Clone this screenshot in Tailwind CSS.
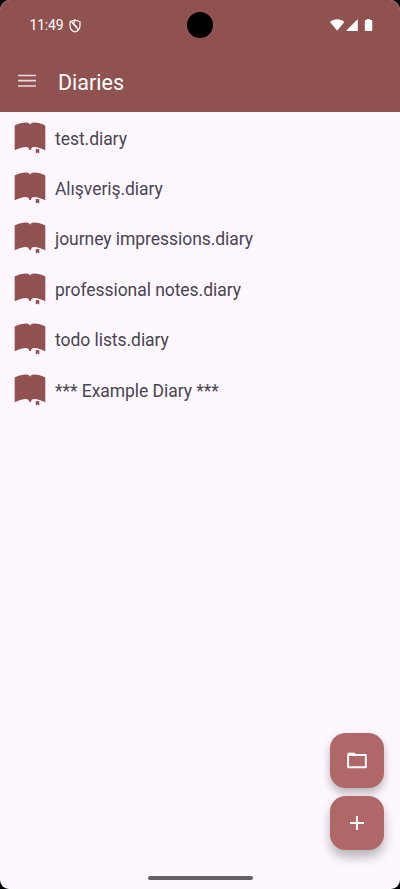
<!DOCTYPE html>
<html lang="en">
<head>
<meta charset="utf-8">
<title>Diaries</title>
<script src="https://cdn.jsdelivr.net/npm/@tailwindcss/browser@4"></script>
</head>
<body class="bg-black">
<svg class="hidden">
  <symbol id="book" viewBox="0 0 32 32">
    <path fill="#905250" d="M.7 3.4C4 1.7 9.2.5 12.4.6C14.6.7 15.6 1.6 16.1 2.8C16.7 1.6 17.7.7 19.8.6C23 .5 28 1.7 31.3 3.4V28.3C27.5 26.4 22.8 25 20.3 25.1C18 25.2 17.4 26.3 16.8 28H15.4C14.8 26.3 14 25.2 11.8 25.1C9.3 25 4.5 26.4.7 28.3Z"/>
    <path fill="#fef7ff" d="M21.2 26H26V31H21.2Z"/>
    <path fill="#905250" d="M21.8 26.9L25.3 27.3V31.6L23.6 30.4L21.8 31.6Z"/>
  </symbol>
</svg>
<div class="relative flex h-[889px] w-[400px] flex-col overflow-hidden rounded-t-[10px] rounded-b-[9px] bg-[#fef7ff] font-[Roboto,sans-serif]">
  <header class="flex h-[112.4px] shrink-0 flex-col bg-[#905250] text-white">
    <div class="flex h-[50px] items-center pr-[27px] pl-[29.5px]">
      <span class="w-[39px] whitespace-nowrap text-[14px] leading-[16px] tracking-[-0.2px]">11:49</span>
      <svg class="mt-px h-[14px] w-[12px]" viewBox="0 0 12 14" fill="none" stroke="white" stroke-width="1.2"><path d="M6 1L11 2.7V6.7C11 9.6 8.7 12 6 13C3.3 12 1 9.6 1 6.7V2.7Z"/><path d="M2.6 3L8.6 9.6V11.4M6 1.2L4.6 4.6L8 8.4"/></svg>
      <svg class="ml-auto h-[14px] w-[43px]" viewBox="0 0 43 14" fill="white"><path d="M0 3.9C4 .3 10.3.3 14.3 3.9L7.2 12.7Z"/><path d="M27.8 1V13H15.8Z"/><path d="M36.7 1H40.2V2.1H41.3Q42.3 2.1 42.3 3.1V12Q42.3 13 41.3 13H35.8Q34.8 13 34.8 12V3.1Q34.8 2.1 35.8 2.1H36.7Z"/></svg>
    </div>
    <div class="flex flex-1 items-center pl-[17.5px]">
      <svg class="h-[14px] w-[18px]" viewBox="0 0 18 14" fill="none" stroke="#eed9dd" stroke-width="1.7"><path d="M0 1.5H18M0 6.7H18M0 12H18"/></svg>
      <h1 class="ml-[22.5px] pt-[3px] text-[21.5px] leading-[28px]">Diaries</h1>
    </div>
  </header>
  <div class="absolute top-[12px] left-[187px] size-[26px] rounded-full bg-black"></div>
  <ul class="text-[17.5px] tracking-[-0.05px] text-[#49454f]">
    <li class="flex h-[50.4px] items-center pl-[14px]"><svg class="size-8"><use href="#book"/></svg><span class="ml-[9px] pt-[2.2px]">test.diary</span></li>
    <li class="flex h-[50.4px] items-center pl-[14px]"><svg class="size-8"><use href="#book"/></svg><span class="ml-[9px] pt-[2.2px]">Alışveriş.diary</span></li>
    <li class="flex h-[50.4px] items-center pl-[14px]"><svg class="size-8"><use href="#book"/></svg><span class="ml-[9px] pt-[2.2px]">journey impressions.diary</span></li>
    <li class="flex h-[50.4px] items-center pl-[14px]"><svg class="size-8"><use href="#book"/></svg><span class="ml-[9px] pt-[2.2px]">professional notes.diary</span></li>
    <li class="flex h-[50.4px] items-center pl-[14px]"><svg class="size-8"><use href="#book"/></svg><span class="ml-[9px] pt-[2.2px]">todo lists.diary</span></li>
    <li class="flex h-[50.4px] items-center pl-[14px]"><svg class="size-8"><use href="#book"/></svg><span class="ml-[9px] pt-[2.2px]">*** Example Diary ***</span></li>
  </ul>
  <div class="absolute top-[733.3px] right-[15.7px] flex flex-col gap-[7.8px]">
    <button aria-label="Open" class="flex size-[54.5px] items-center justify-center rounded-[15.6px] bg-[#b06767] shadow-[0_5px_9px_rgba(0,0,0,0.28)]"><svg class="h-[17px] w-[20px]" viewBox="0 0 20 17" fill="none" stroke="white" stroke-width="1.9" stroke-linejoin="round"><path d="M1.1 3H18.8V15.3H1.1Z"/><path d="M1.1 3V1.2H7.5L9.3 3Z" fill="white" stroke-width="1"/></svg></button>
    <button aria-label="Add" class="flex size-[54.5px] items-center justify-center rounded-[15.6px] bg-[#b06767] shadow-[0_7px_11px_rgba(0,0,0,0.28)]"><svg class="size-[14px]" viewBox="0 0 14 14" stroke="white" stroke-width="1.9"><path d="M7 0V14M0 7H14"/></svg></button>
  </div>
  <div class="absolute bottom-[9.5px] left-[147.5px] h-[4px] w-[105px] rounded-full bg-[#646066]"></div>
</div>
</body>
</html>
